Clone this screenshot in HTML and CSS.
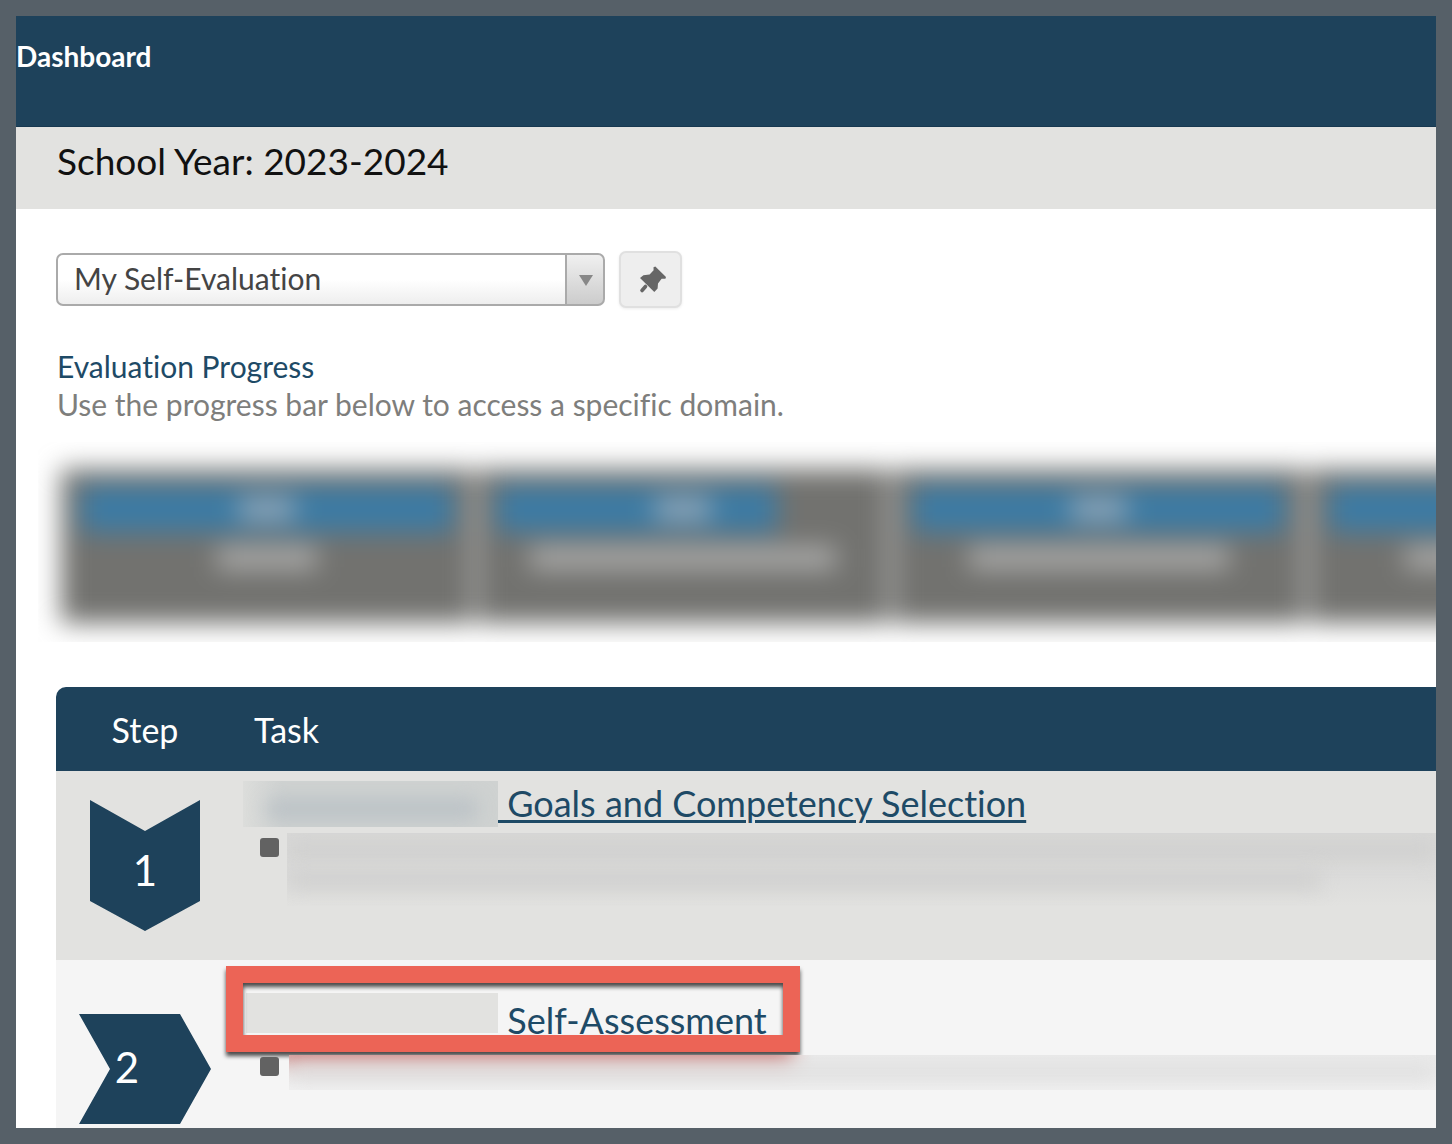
FILE: index.html
```html
<!DOCTYPE html>
<html lang="en">
<head>
<meta charset="utf-8">
<title>Dashboard</title>
<link rel="stylesheet" href="styles.css">
</head>
<body>
<div class="app">
  <header class="topbar"><a class="topbar-link" href="#">Dashboard</a></header>
  <div class="yearbar"><h1 class="year">School Year: 2023-2024</h1></div>
  <main class="content">
    <div class="picker">
      <div class="select-wrap">
        <select class="select" aria-label="Evaluation">
          <option>My Self-Evaluation</option>
        </select>
      </div>
      <button class="pin" type="button" aria-label="Pin">
        <svg width="28" height="28" viewBox="0 0 28 28" aria-hidden="true">
          <path fill="#666" d="M14.500 1.200 16.300.600 27 11 26.400 12.800 22.600 12.800 19 17.600 18.600 22.600 15.300 26 1 12 4.400 9.200 10.600 8.500 14.600 4.200Z"/>
          <path stroke="#666" stroke-width="3.600" stroke-linecap="round" d="M6.500 20.500 3 24.500"/>
        </svg>
      </button>
    </div>

    <section class="progress">
      <h2 class="progress-title">Evaluation Progress</h2>
      <p class="progress-help">Use the progress bar below to access a specific domain.</p>
      <div class="strip" aria-hidden="true">
        <div class="tiles">
          <div class="tile"><div class="bar"><i class="pct"></i></div><i class="name" style="width:100px"></i></div>
          <div class="tile"><div class="bar bar-part"><i class="pct"></i></div><i class="name" style="width:306px"></i></div>
          <div class="tile"><div class="bar"><i class="pct"></i></div><i class="name" style="width:260px"></i></div>
          <div class="tile"><div class="bar"><i class="pct"></i></div><i class="name" style="width:220px"></i></div>
        </div>
      </div>
    </section>

    <table class="steps">
      <thead>
        <tr><th class="step-col" scope="col">Step</th><th class="task-col" scope="col">Task</th></tr>
      </thead>
      <tbody>
        <tr class="row row-first">
          <td class="step-cell">
            <div class="badge badge-down">1</div>
          </td>
          <td class="task-cell">
            <div class="task-line">
              <span class="mask mask-soft"><i class="smear"></i></span><a class="task-link" href="#">&nbsp;Goals and Competency Selection</a>
            </div>
            <ul class="notes">
              <li class="note"><span class="haze haze-tall"><i class="haze-line"></i><i class="haze-line haze-short"></i></span></li>
            </ul>
          </td>
        </tr>
        <tr class="row row-second">
          <td class="step-cell">
            <div class="badge badge-right">2</div>
          </td>
          <td class="task-cell">
            <div class="task-line">
              <span class="mask"></span><a class="task-link task-link-plain" href="#">&nbsp;Self-Assessment</a>
              <span class="callout"></span>
            </div>
            <ul class="notes">
              <li class="note"><span class="haze haze-low"><i class="haze-red"></i><i class="haze-line"></i></span></li>
            </ul>
          </td>
        </tr>
      </tbody>
    </table>
  </main>
</div>
</body>
</html>
```
FILE: styles.css
```css
* { box-sizing: border-box; }

body {
  margin: 0;
  padding: 16px;
  min-height: 100vh;
  background: #566068;
  font-family: Lato, "Liberation Sans", sans-serif;
  font-variant-ligatures: no-common-ligatures;
  color: #111;
}

.app {
  background: #fff;
  overflow: hidden;
}

.topbar {
  height: 111px;
  padding-top: 24px;
  background: #1e425b;
  border-bottom: 1px solid #173850;
}

.topbar-link {
  display: block;
  font-size: 28px;
  font-weight: 700;
  line-height: 32px;
  color: #fff;
  text-decoration: none;
}

.yearbar {
  height: 82px;
  padding: 10px 41px;
  background: #e2e2e0;
}

.year {
  margin: 0;
  font-size: 37px;
  font-weight: 400;
  line-height: 48px;
}

.content { padding: 42px 0 0 40px; }

.picker {
  display: flex;
  align-items: center;
  gap: 14px;
}

.select-wrap {
  position: relative;
  flex: 0 1 549px;
}

.select {
  display: block;
  width: 100%;
  height: 53px;
  padding: 0 56px 3px 16px;
  appearance: none;
  border: 2px solid #aaa;
  border-radius: 7px;
  background:
    linear-gradient(#aaa, #aaa) right 36px top / 2px 100% no-repeat,
    linear-gradient(#f0f0f0, #ccc) right top / 37px 100% no-repeat,
    linear-gradient(#fff 50%, #eee);
  font: 400 30px/40px Lato, "Liberation Sans", sans-serif;
  font-variant-ligatures: no-common-ligatures;
  color: #444;
}

.select-wrap::after {
  content: "";
  position: absolute;
  right: 12px;
  top: 22px;
  width: 14px;
  height: 11px;
  background: #888;
  clip-path: polygon(0 0, 100% 0, 50% 100%);
  pointer-events: none;
}

.pin {
  display: flex;
  align-items: center;
  justify-content: center;
  width: 63px;
  height: 57px;
  padding: 0 0 0 4px;
  border: 2px solid #e0e0e0;
  border-radius: 7px;
  background: #eee;
  box-shadow: 0 1px 3px rgba(0, 0, 0, .08);
}

.progress { margin-top: 39px; }

.progress-title,
.progress-help {
  margin: 0;
  padding-left: 1px;
  font-size: 30px;
  font-weight: 400;
  line-height: 38px;
}

.progress-title { color: #1e4a66; }
.progress-help { color: #7e7e7c; }

.strip {
  height: 200px;
  margin: 19px 0 0 -18px;
  padding: 27px 0 20px 23px;
  overflow: hidden;
}

.tiles {
  display: flex;
  gap: 4px;
  width: max-content;
  filter: blur(13px);
}

.tile {
  width: 412px;
  height: 154px;
  padding: 17px 20px;
  background: #72726f;
}

.bar {
  display: flex;
  align-items: center;
  justify-content: center;
  height: 46px;
  background: #3c7ba4;
}

.bar-part {
  width: 280px;
  padding-left: 92px;
}

.pct {
  width: 56px;
  height: 22px;
  background: #94a8b8;
}

.name {
  display: block;
  height: 22px;
  margin: 15px auto 0;
  background: #acacab;
}

.steps {
  width: 100%;
  margin-top: 45px;
  border-collapse: separate;
  border-spacing: 0;
  table-layout: fixed;
}

.steps th {
  height: 84px;
  padding: 0;
  background: #1e425b;
  font-size: 34px;
  font-weight: 400;
  color: #fff;
}

.steps .step-col {
  width: 178px;
  border-top-left-radius: 10px;
}

.steps .task-col {
  padding-left: 20px;
  text-align: left;
}

.row td {
  padding: 0;
  vertical-align: top;
}

.row-first td { height: 189px; background: #e2e2e0; }
.row-second td { height: 168px; background: #f5f5f5; }

.badge {
  display: flex;
  align-items: center;
  justify-content: center;
  margin: 0 auto;
  background: #1e425b;
  font-size: 42px;
  color: #fff;
}

.badge-down {
  width: 110px;
  height: 131px;
  margin-top: 29px;
  padding-top: 9px;
  clip-path: polygon(0 0, 50% 31px, 100% 0, 100% 101px, 50% 100%, 0 101px);
}

.badge-right {
  width: 132px;
  height: 110px;
  margin-top: 54px;
  padding: 0 36px 4px 0;
  clip-path: polygon(0 0, 101px 0, 100% 50%, 101px 100%, 0 100%, 31px 50%);
}

.task-line {
  position: relative;
  display: flex;
  align-items: center;
  height: 46px;
  margin: 10px 0 0 9px;
}

.row-second .task-line { margin-top: 33px; height: 40px; }

.mask {
  flex: none;
  width: 252px;
  height: 40px;
  margin-left: 3px;
  background: #e2e2e0;
}

.mask-soft {
  width: 255px;
  height: 46px;
  margin-left: 0;
  background: linear-gradient(90deg, #dcdddb, #cfd2d1 40px);
  overflow: hidden;
}

.smear {
  display: block;
  width: 210px;
  height: 18px;
  margin: 19px 0 0 24px;
  background: #b7bfc4;
  filter: blur(10px);
}

.task-link {
  padding-bottom: 2px;
  font-size: 36px;
  line-height: 46px;
  color: #1e4a66;
  text-decoration-thickness: 3px;
  text-underline-offset: 3px;
}

.task-link-plain {
  padding: 14px 0 0;
  text-decoration: none;
}

/* Red highlight drawn round the current task */
.callout {
  position: absolute;
  left: -17px;
  top: -27px;
  width: 574px;
  height: 86px;
  border: 17px solid #ec6456;
  filter: drop-shadow(0 4px 2px rgba(0, 0, 0, .7));
  pointer-events: none;
}

.notes {
  position: relative;
  margin: 6px 0 0 26px;
  padding: 0;
  list-style: none;
}

.row-second .notes { margin-top: 22px; }

.note {
  display: flex;
  gap: 8px;
}

.note::before {
  content: "";
  flex: none;
  width: 19px;
  height: 19px;
  margin-top: 5px;
  border-radius: 3px;
  background: #626262;
}

.row-second .note::before { margin-top: 2px; }

.haze {
  flex: 1;
  overflow: hidden;
}

.haze-tall { height: 73px; background: linear-gradient(#d8d8d7, #dcdcdb 60%, #e2e2e0); }
.haze-low { height: 35px; margin-left: 2px; background: linear-gradient(#ebebeb, #f1f1f1); }

.haze-line {
  display: block;
  height: 18px;
  margin-top: 8px;
  background: #cfcfce;
  filter: blur(10px);
}

.haze-short {
  width: 90%;
  margin-top: 12px;
}

.haze-low .haze-line { margin-top: 0; background: #dedede; }

.haze-red {
  display: block;
  width: 514px;
  height: 24px;
  margin: -16px 0 0 -10px;
  background: #c66f6c;
  filter: blur(10px);
}
```
